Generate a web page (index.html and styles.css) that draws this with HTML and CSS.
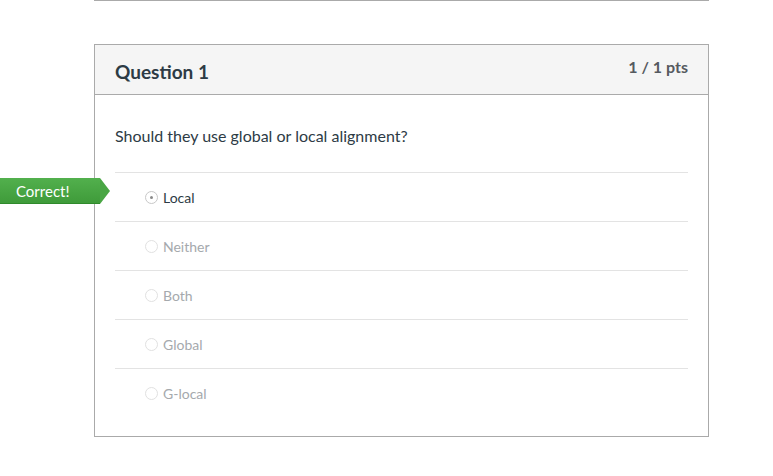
FILE: index.html
```html
<!DOCTYPE html>
<html>
<head>
<meta charset="utf-8">
<link rel="stylesheet" href="styles.css">
</head>
<body>
<div class="page">
  <div class="prev-box"></div>
  <div class="question">
    <div class="q-header">
      <div class="q-name">Question 1</div>
      <div class="q-pts">1 / 1 pts</div>
    </div>
    <div class="q-body">
      <div class="q-text">Should they use global or local alignment?</div>
      <div class="answers">
        <div class="answer selected">
          <span class="flag">Correct!</span>
          <span class="radio"></span><span class="label">Local</span>
        </div>
        <div class="answer"><span class="radio"></span><span class="label">Neither</span></div>
        <div class="answer"><span class="radio"></span><span class="label">Both</span></div>
        <div class="answer"><span class="radio"></span><span class="label">Global</span></div>
        <div class="answer"><span class="radio"></span><span class="label">G-local</span></div>
      </div>
    </div>
  </div>
</div>
</body>
</html>
```
FILE: styles.css
```css
html, body { margin: 0; padding: 0; background: #fff; }
body { font-family: Lato, "Open Sans", sans-serif; color: #2d3b45; }
.page { position: relative; padding-left: 94px; width: 615px; }
.prev-box { height: 1px; border: 1px solid #aaa; border-top: none; margin-top: -1px; }
.question { margin-top: 43px; border: 1px solid #aaa; }
.q-header {
  background: #f5f5f5; border-bottom: 1px solid #aaa; height: 50px;
  display: flex; justify-content: space-between; padding: 0 20px; box-sizing: border-box;
}
.q-name { font-weight: 700; font-size: 19px; padding-top: 15px; line-height: 24px; }
.q-pts { font-weight: 700; font-size: 16px; color: #555a60; padding-top: 12px; line-height: 20px; }
.q-body { padding: 31px 20px 19px; }
.q-text { font-size: 16px; line-height: 20px; margin-bottom: 26px; }
.answer {
  position: relative; border-top: 1px solid #e3e3e3;
  display: flex; align-items: center; padding-left: 30px; padding-top: 1px; padding-bottom: 1px;
  box-sizing: content-box; height: 46px; font-size: 14px; color: #a5a9ad;
}
.answer.selected { color: #2d3b45; }
.radio {
  border: 1px solid #e1e1e1; border-radius: 50%;
  margin-right: 5px; box-sizing: border-box; position: relative; flex: none;
  width: 13px; height: 13px;
}
.selected .radio { border-color: #c8c8c8; }
.selected .radio::after {
  content: ""; position: absolute; left: 4px; top: 4px; width: 3px; height: 3px;
  border-radius: 50%; background: #8a8a8a;
}
.flag {
  position: absolute; left: -115px; top: 5px; height: 26px; width: 100px;
  background: linear-gradient(#52b04d, #3f9b3a); color: #fff; font-size: 15px;
  line-height: 26px; padding-left: 16px; box-sizing: border-box;
  border-bottom: 1px solid #2f8a2b;
}
.flag::after {
  content: ""; position: absolute; left: 100px; top: 0; width: 0; height: 0;
  border-top: 13px solid transparent; border-bottom: 13px solid transparent;
  border-left: 10px solid #49a644;
}
```
